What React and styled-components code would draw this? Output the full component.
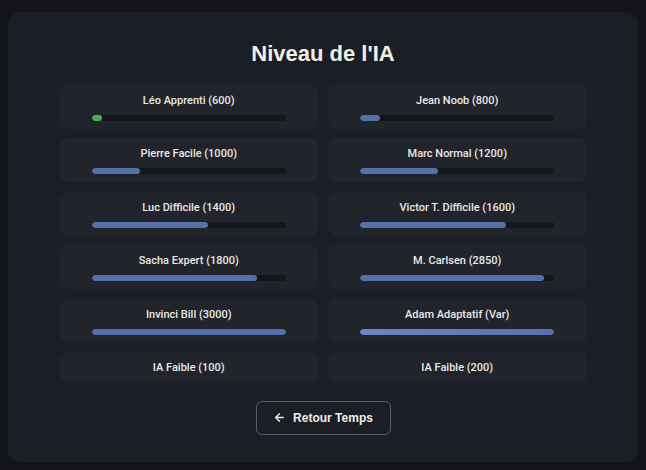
import React from "react";
import styled, { createGlobalStyle } from "styled-components";
import { ArrowLeft } from "lucide-react";

const levels = [
  { id: 1, name: "Léo Apprenti (600)", pct: 5, color: "green" },
  { id: 2, name: "Jean Noob (800)", pct: 10 },
  { id: 3, name: "Pierre Facile (1000)", pct: 25 },
  { id: 4, name: "Marc Normal (1200)", pct: 40 },
  { id: 5, name: "Luc Difficile (1400)", pct: 60 },
  { id: 6, name: "Victor T. Difficile (1600)", pct: 75 },
  { id: 7, name: "Sacha Expert (1800)", pct: 85 },
  { id: 8, name: "M. Carlsen (2850)", pct: 95 },
  { id: 9, name: "Invinci Bill (3000)", pct: 100 },
  { id: 10, name: "Adam Adaptatif (Var)", pct: 100, color: "light" },
  { id: 11, name: "IA Faible (100)" },
  { id: 12, name: "IA Faible (200)" },
];

const App = () => {
  return (
    <React.Fragment>
      <GlobalStyle />
      <Panel>
        <Title>Niveau de l'IA</Title>
        <Grid>
          {levels.map((lvl) => {
            return (
              <Card key={lvl.id}>
                <Name>{lvl.name}</Name>
                {lvl.pct !== undefined && (
                  <Track>
                    <Fill $color={lvl.color} style={{ width: `${lvl.pct}%` }} />
                  </Track>
                )}
              </Card>
            );
          })}
        </Grid>
        <BackButton>
          <ArrowLeft size={13} strokeWidth={2.6} />
          Retour Temps
        </BackButton>
      </Panel>
    </React.Fragment>
  );
};

const GlobalStyle = createGlobalStyle`
  html, body {
    margin: 0;
    background: #121418;
    font-family: "Liberation Sans", Arial, sans-serif;
  }
  body {
    padding: 12px 8px 8px 8px;
  }
`;

const Panel = styled.div`
  width: 630px;
  height: 450px;
  box-sizing: border-box;
  background: #1b1e24;
  border-radius: 12px;
  padding: 29px 0 0;
  display: flex;
  flex-direction: column;
  align-items: center;
`;

const Title = styled.h1`
  margin: 0 0 19px;
  font-size: 22px;
  line-height: 25px;
  font-weight: 700;
  color: #f3eee4;
`;

const Grid = styled.div`
  width: 527px;
  display: grid;
  grid-template-columns: 1fr 1fr;
  column-gap: 10px;
  row-gap: 9.4px;
`;

const Card = styled.div`
  background: #21242b;
  border-radius: 8px;
  padding: 8px 0;
  display: flex;
  flex-direction: column;
  align-items: center;
  gap: 7px;
`;

const Name = styled.div`
  font-family: Roboto, "Liberation Sans", Arial, sans-serif;
  font-size: 11px;
  font-weight: 500;
  line-height: 15px;
  color: #ebe9e4;
`;

const Track = styled.div`
  width: 75%;
  height: 6px;
  background: #14161a;
  border-radius: 3px;
  overflow: hidden;
`;

const Fill = styled.div`
  height: 100%;
  border-radius: 3px;
  background: ${(p) =>
    p.$color === "green"
      ? "#4caf50"
      : p.$color === "light"
      ? "linear-gradient(90deg, #6b86c2, #5873ab)"
      : "#5470a8"};
`;

const BackButton = styled.button`
  margin-top: 18px;
  width: 135px;
  height: 34px;
  display: flex;
  align-items: center;
  justify-content: center;
  gap: 7px;
  background: transparent;
  border: 1px solid #5a5d63;
  border-radius: 6px;
  color: #f0ede6;
  font-family: "Liberation Sans", Arial, sans-serif;
  font-size: 12px;
  font-weight: 700;
  cursor: pointer;
`;

export default App;
